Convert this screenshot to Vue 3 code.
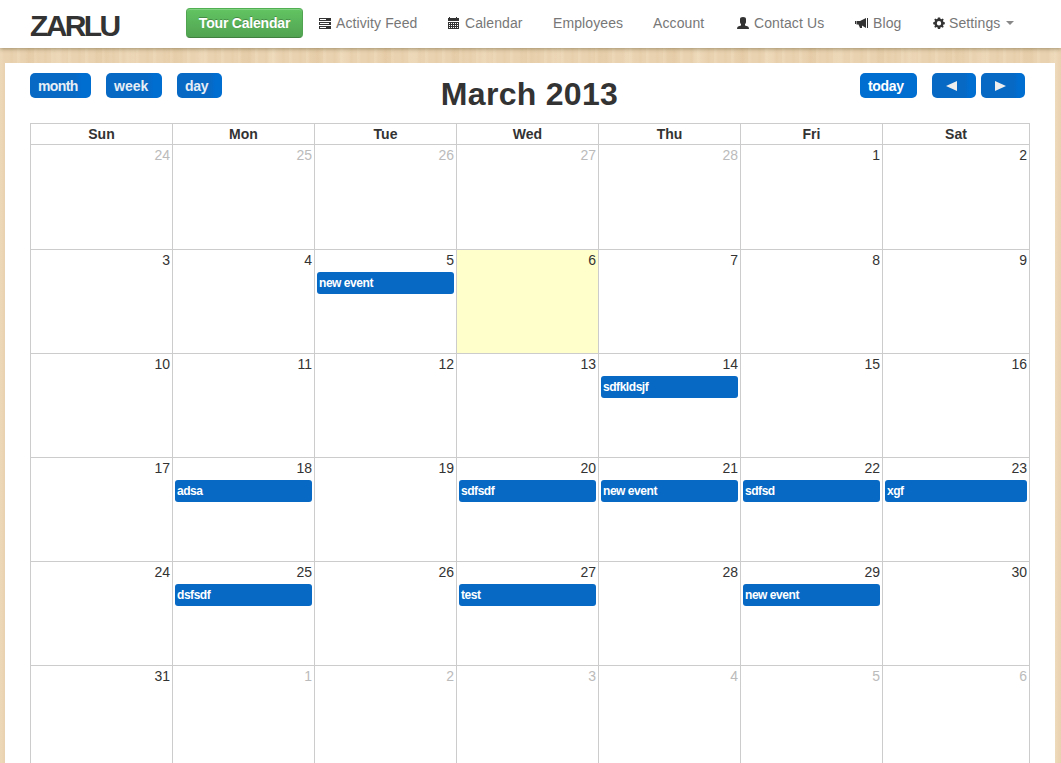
<script setup>
const nav = [
  { label: 'Activity Feed', icon: 'list' },
  { label: 'Calendar', icon: 'calendar' },
  { label: 'Employees' },
  { label: 'Account' },
  { label: 'Contact Us', icon: 'user' },
  { label: 'Blog', icon: 'horn' },
  { label: 'Settings', icon: 'cog', caret: true },
]
const weekdays = ['Sun', 'Mon', 'Tue', 'Wed', 'Thu', 'Fri', 'Sat']
const events = {
  5: 'new event', 14: 'sdfkldsjf', 18: 'adsa', 20: 'sdfsdf', 21: 'new event',
  22: 'sdfsd', 23: 'xgf', 25: 'dsfsdf', 27: 'test', 29: 'new event',
}
const days = Array.from({ length: 42 }, (_, i) => {
  const n = i - 4
  if (n < 1) return { n: n + 28, other: true }
  if (n > 31) return { n: n - 31, other: true }
  return { n, today: n === 6, event: events[n] }
})
</script>

<template>
  <div class="page">
    <header class="navbar">
      <div class="brand">ZARLU</div>
      <button class="tour">Tour Calendar</button>
      <nav class="links">
        <a v-for="item in nav" :key="item.label" class="link">
          <svg v-if="item.icon" class="icon" :class="item.icon" width="14" height="14" viewBox="0 0 14 14">
            <path v-if="item.icon === 'list'" fill-rule="evenodd" d="M0 1h12v3H0zM1 2v1h6V2zM0 5h12v3H0zM1 6v1h9V6zM0 9h12v3H0zM1 10v1h6v-1z" />
            <path v-else-if="item.icon === 'calendar'" fill-rule="evenodd" d="M0 1h1V0h1v1h6V0h1v1h2v3H0zM0 5h11v7H0zM1 6v1h1V6zM3 6v1h1V6zM5 6v1h1V6zM7 6v1h1V6zM9 6v1h1V6zM1 8v1h1V8zM3 8v1h1V8zM5 8v1h1V8zM7 8v1h1V8zM9 8v1h1V8zM1 10v1h1v-1zM3 10v1h1v-1zM5 10v1h1v-1zM7 10v1h1v-1zM9 10v1h1v-1z" />
            <path v-else-if="item.icon === 'user'" d="M3 2Q3 0 6 0T9 2V5Q9 6.500 8 7V8.500L11 9.500Q12 10 12 12H0Q0 10 1 9.500L4 8.500V7Q3 6.500 3 5z" />
            <path v-else-if="item.icon === 'horn'" d="M0 4h1v3H0zM1.500 4H5L11 1v10L7 8.500V11H5L3.500 7.500h-2zM12 1h1v10h-1z" />
            <path v-else fill-rule="evenodd" d="M4.900.5h2.200l.3 1.300 1.100.5 1.200-.7 1 1-.7 1.200.5 1.100 1.300.3v2l-1.300.3-.5 1.100.7 1.200-1 1-1.200-.7-1.100.5-.3 1.400H4.900l-.3-1.400-1.100-.5-1.200.7-1-1L2 8.600l-.5-1.100L.2 7.200v-2l1.300-.3L2 3.800l-.7-1.200 1-1 1.200.7 1.100-.5zM6 4a2.200 2.200 0 1 0 0 4.400A2.200 2.200 0 0 0 6 4z" />
          </svg>
          <span>{{ item.label }}</span>
          <i v-if="item.caret" class="caret"></i>
        </a>
      </nav>
    </header>

    <main class="panel">
      <div class="toolbar">
        <div class="views">
          <button class="btn month">month</button>
          <button class="btn week">week</button>
          <button class="btn day-view">day</button>
        </div>
        <h1>March 2013</h1>
        <div class="pager">
          <button class="btn today-btn">today</button>
          <button class="btn arrow"><svg width="12" height="12" viewBox="0 0 12 12"><path d="M11 1v10L0 6z" /></svg></button>
          <button class="btn arrow next"><svg width="12" height="12" viewBox="0 0 12 12"><path d="M0 1v10l11-5z" /></svg></button>
        </div>
      </div>
      <div class="calendar">
        <div v-for="d in weekdays" :key="d" class="head">{{ d }}</div>
        <div v-for="(d, i) in days" :key="i" class="cell" :class="{ other: d.other, today: d.today }">
          <div class="num">{{ d.n }}</div>
          <div v-if="d.event" class="event">{{ d.event }}</div>
        </div>
      </div>
    </main>
  </div>
</template>

<style>
body { overflow: hidden; }
</style>

<style scoped>
.page {
  height: 763px;
  overflow: hidden;
  box-sizing: border-box;
  font: 14px/20px "Liberation Sans", Arial, sans-serif;
  color: #333;
  background-color: #e9d2b0;
  background-image:
    repeating-linear-gradient(90deg, rgba(255,245,220,.13) 0 2px, transparent 4px 9px, rgba(190,140,80,.04) 11px 12px, transparent 14px 17px),
    repeating-linear-gradient(90deg, transparent 0 23px, rgba(205,155,95,.08) 30px 34px, transparent 41px 53px, rgba(255,245,225,.16) 57px 60px, transparent 67px 71px);
}
.navbar {
  position: relative;
  display: flex;
  height: 48px;
  background: #fff;
  box-shadow: 0 1px 4px rgba(70,60,20,.45);
}
.brand {
  width: 156px;
  padding: 10px 0 0 30px;
  font-size: 30px;
  line-height: 32px;
  font-weight: bold;
  letter-spacing: -2.6px;
}
.tour {
  width: 117px;
  height: 30px;
  margin: 8px 16px 0 0;
  padding: 0;
  border: 1px solid #51a351;
  border-color: #51b051 #51a351 #408140;
  border-radius: 4px;
  background: linear-gradient(#62c462, #51a351);
  box-shadow: inset 0 1px 0 rgba(255,255,255,.2);
  color: #fff;
  font: bold 14px/20px "Liberation Sans", Arial, sans-serif;
  letter-spacing: -.2px;
  text-shadow: 0 -1px 0 rgba(0,0,0,.25);
}
.links {
  display: grid;
  grid-template-columns: 128px 106px 100px 84px 118px 78px 90px;
  padding-top: 13px;
  height: 20px;
}
.link { display: flex; color: #777; white-space: nowrap; letter-spacing: .1px; }
.icon { width: 14px; margin: 4px 3px 0 0; fill: #333; flex: none; }
.calendar.icon { margin-left: 1px; border: 0; }
.horn { margin-right: 4px; }
.cog { margin-right: 2px; }
.caret {
  height: 0;
  margin: 8px 0 0 6px;
  border: 4px solid transparent;
  border-top-color: #888;
  border-bottom: 0;
}
.panel { height: 700px; margin: 15px 6px 0 5px; background: #fff; overflow: hidden; }
.toolbar {
  display: grid;
  grid-template-columns: 1fr auto 1fr;
  height: 60px;
  padding: 0 29px 0 26px;
}
.views, .pager { display: flex; padding-top: 10px; }
.views { margin-left: -1px; }
.pager { justify-content: flex-end; margin-right: 1px; }
h1 { margin: 0; padding: 11px 0 0 2px; font-size: 32px; line-height: 40px; letter-spacing: .3px; }
.btn {
  height: 25px;
  padding: 1px 0 0 8px;
  border: 0;
  border-radius: 5px;
  background: linear-gradient(90deg, #0769c4 75%, #006dd1 85%);
  color: #e6eef6;
  font: bold 14px/24px "Liberation Sans", Arial, sans-serif;
  letter-spacing: -.3px;
  text-align: left;
}
.month { width: 61px; margin-right: 15px; letter-spacing: -.6px; }
.week { width: 56px; margin-right: 15px; letter-spacing: 0; }
.day-view { width: 45px; }
.today-btn { width: 57px; margin-right: 15px; background: #006dd1; color: #fff; }
.arrow { width: 44px; padding-left: 14px; }
.arrow svg { display: block; fill: #eee; }
.next { margin-left: 5px; }
div.calendar {
  display: grid;
  grid-template-columns: repeat(6, 142px) 147px;
  grid-template-rows: 21px 105px repeat(5, 104px);
  width: 999px;
  margin-left: 25px;
  border-top: 1px solid #ccc;
  border-left: 1px solid #ccc;
}
.head, .cell { border-right: 1px solid #ccc; border-bottom: 1px solid #ccc; }
.head { text-align: center; font-weight: bold; line-height: 20px; }
.cell { padding: 0 2px; }
.num { text-align: right; line-height: 20px; height: 22px; }
.other .num { color: #bbb; }
.today { background: #ffffcc; }
.event {
  height: 22px;
  border-radius: 3px;
  padding-left: 2px;
  background: #0769c4;
  color: #fff;
  font: bold 12px/23px "Liberation Sans", Arial, sans-serif;
  letter-spacing: -.45px;
}
</style>
